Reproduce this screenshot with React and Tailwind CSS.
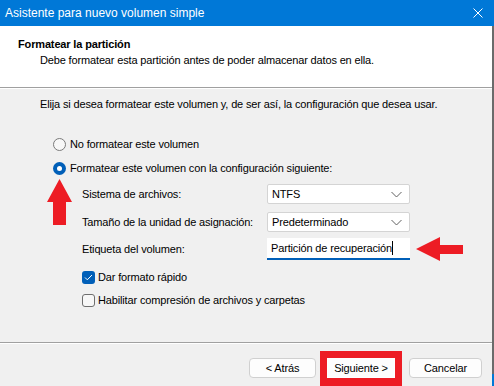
import React from 'react'

const ChevronDown = () => (
  <svg width="11" height="7" viewBox="0 0 11 7" className="mr-[7px]">
    <path d="M0.5 1 L5.5 6 L10.5 1" fill="none" stroke="#606060" strokeWidth="1" />
  </svg>
)

const Combo = ({ value }) => (
  <div className="w-[143px] h-[20px] bg-white border border-[#d4d4d4] rounded-[2px] flex items-center justify-between">
    <span className="pl-[4px]">{value}</span>
    <ChevronDown />
  </div>
)

const Radio = ({ checked }) =>
  checked ? (
    <div className="w-[13px] h-[13px] rounded-full bg-[#005fb8] flex items-center justify-center">
      <div className="w-[5px] h-[5px] rounded-full bg-white" />
    </div>
  ) : (
    <div className="w-[13px] h-[13px] rounded-full border border-[#7a7a7a] bg-[#f7f7f7]" />
  )

const Checkbox = ({ checked }) =>
  checked ? (
    <div className="w-[13px] h-[13px] rounded-[3px] bg-[#005fb8] flex items-center justify-center">
      <svg width="9" height="7" viewBox="0 0 9 7">
        <path d="M1 3.5 L3.3 5.8 L8 1" fill="none" stroke="#ffffff" strokeWidth="1" />
      </svg>
    </div>
  ) : (
    <div className="w-[13px] h-[13px] rounded-[3px] border border-[#6e6e6e] bg-[#f7f7f7]" />
  )

const Button = ({ children, className = '' }) => (
  <div className={`h-[20px] bg-[#fdfdfd] border border-[#d0d0d0] rounded-[4px] flex items-center justify-center ${className}`}>
    {children}
  </div>
)

export default function App() {
  return (
    <div
      className="w-[494px] h-[386px] flex text-[11px] tracking-[-0.15px] text-black overflow-hidden whitespace-nowrap"
      style={{ fontFamily: '"Liberation Sans", Arial, sans-serif' }}
    >
      <div className="w-[492px] h-full flex flex-col bg-[#f0f0f0]">
        {/* Title bar */}
        <div className="h-[26px] bg-[#0078d7] text-white flex items-center justify-between pl-[5px] pr-[9px] text-[12px] tracking-normal">
          <span>Asistente para nuevo volumen simple</span>
          <svg width="10" height="10" viewBox="0 0 10 10">
            <path d="M0.5 0.5 L9.5 9.5 M9.5 0.5 L0.5 9.5" stroke="#ffffff" strokeWidth="1" />
          </svg>
        </div>

        {/* Header */}
        <div className="h-[61px] bg-white pt-[10px] pl-[18px]">
          <div className="font-bold leading-[16px]">Formatear la partición</div>
          <div className="pl-[22px] leading-[16px]">
            Debe formatear esta partición antes de poder almacenar datos en ella.
          </div>
        </div>
        <div className="h-[1px] bg-[#a0a0a0]" />
        <div className="h-[1px] bg-white" />

        {/* Body */}
        <div className="flex-1 flex flex-col pl-[40px] pt-[7px]">
          <div className="leading-[16px]">
            Elija si desea formatear este volumen y, de ser así, la configuración que desea usar.
          </div>

          <div className="flex items-center gap-[4px] mt-[24px] ml-[13px] h-[16px]">
            <Radio />
            <span>No formatear este volumen</span>
          </div>
          <div className="relative flex items-center gap-[4px] mt-[8px] ml-[13px] h-[16px]">
            <Radio checked />
            <span>Formatear este volumen con la configuración siguiente:</span>
            {/* red arrow up */}
            <svg width="25" height="46" viewBox="0 0 25 46" className="absolute left-[-6px] top-[19px]">
              <path d="M12.5 0 L25 23 L19 23 L19 46 L6 46 L6 23 L0 23 Z" fill="#ed1c24" />
            </svg>
          </div>

          <div className="ml-[42px] mt-[8px] flex flex-col">
            <div className="flex items-center">
              <span className="w-[185px]">Sistema de archivos:</span>
              <Combo value="NTFS" />
            </div>
            <div className="flex items-center mt-[8px]">
              <span className="w-[185px]">Tamaño de la unidad de asignación:</span>
              <Combo value="Predeterminado" />
            </div>
            <div className="relative flex items-center mt-[6px]">
              <span className="w-[185px]">Etiqueta del volumen:</span>
              <div className="w-[143px] h-[22px] bg-white border-b-2 border-[#005fb8] flex items-center pl-[4px]">
                <span>Partición de recuperación</span>
                <span className="w-[1px] h-[14px] bg-black" />
              </div>
              {/* red arrow left */}
              <svg width="47" height="24" viewBox="0 0 47 24" className="absolute left-[334px] top-[-1px]">
                <path d="M0 12 L24 0 L24 8 L47 8 L47 17 L24 17 L24 24 Z" fill="#ed1c24" />
              </svg>
            </div>
          </div>

          <div className="ml-[42px] mt-[9px] flex flex-col gap-[7px]">
            <div className="flex items-center gap-[3px] h-[16px]">
              <Checkbox checked />
              <span>Dar formato rápido</span>
            </div>
            <div className="flex items-center gap-[3px] h-[16px]">
              <Checkbox />
              <span>Habilitar compresión de archivos y carpetas</span>
            </div>
          </div>
        </div>

        <div className="h-[1px] bg-[#a0a0a0]" />
        <div className="h-[1px] bg-white" />

        {/* Footer */}
        <div className="h-[42px] flex items-end justify-end pr-[10px]">
          <Button className="w-[67px] mb-[8px]">&lt; Atrás</Button>
          <div className="ml-[4px] border-[7px] border-b-[8px] border-[#ed1c24]">
            <Button className="w-[68px] border-white rounded-none">Siguiente &gt;</Button>
          </div>
          <Button className="w-[73px] ml-[7px] mb-[8px]">Cancelar</Button>
        </div>
      </div>
      <div className="w-[2px] h-full flex flex-col">
        <div className="h-[26px] bg-[#0078d7]" />
        <div className="flex-1 bg-[#6b6b6b]" />
        <div className="h-[12px] bg-[#0078d7]" />
      </div>
    </div>
  )
}
